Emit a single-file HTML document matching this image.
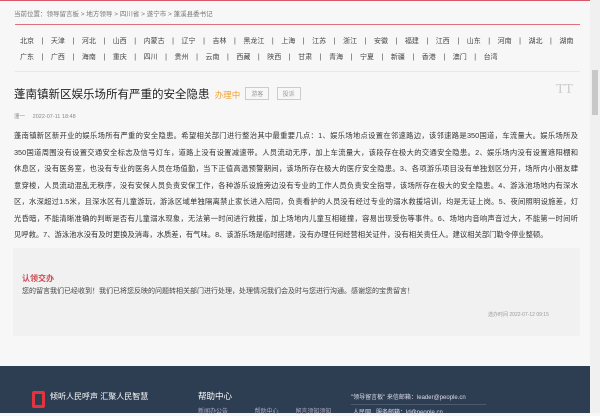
<!DOCTYPE html>
<html><head><meta charset="utf-8"><style>
*{margin:0;padding:0;box-sizing:border-box}
body{width:600px;height:413px;overflow:hidden;background:#f8f7f8;font-family:"Liberation Sans","Noto Sans CJK SC",sans-serif;color:#333;position:relative}
.abs{position:absolute}
.prov{font-size:7px;color:#444;white-space:nowrap}
.prov span{margin:0 5.6px}
.body div{white-space:nowrap;text-align:justify;text-align-last:justify;height:16.5px}
.body div.last{text-align-last:left}
</style></head><body>
<div class="abs" style="left:0;top:0;width:590px;height:1px;background:#d9596a"></div>
<div class="abs" style="left:14px;top:8px;font-size:6.5px;color:#777">当前位置：领导留言板 &gt; 地方领导 &gt; 四川省 &gt; 遂宁市 &gt; 蓬溪县委书记</div>
<div class="abs" style="left:15px;top:24px;width:565px;height:1px;background:#e07080"></div>
<div class="abs prov" style="left:20px;top:36px">北京 <span>|</span> 天津 <span>|</span> 河北 <span>|</span> 山西 <span>|</span> 内蒙古 <span>|</span> 辽宁 <span>|</span> 吉林 <span>|</span> 黑龙江 <span>|</span> 上海 <span>|</span> 江苏 <span>|</span> 浙江 <span>|</span> 安徽 <span>|</span> 福建 <span>|</span> 江西 <span>|</span> 山东 <span>|</span> 河南 <span>|</span> 湖北 <span>|</span> 湖南</div>
<div class="abs prov" style="left:20px;top:52px">广东 <span>|</span> 广西 <span>|</span> 海南 <span>|</span> 重庆 <span>|</span> 四川 <span>|</span> 贵州 <span>|</span> 云南 <span>|</span> 西藏 <span>|</span> 陕西 <span>|</span> 甘肃 <span>|</span> 青海 <span>|</span> 宁夏 <span>|</span> 新疆 <span>|</span> 香港 <span>|</span> 澳门 <span>|</span> 台湾</div>
<div class="abs" style="left:15px;top:71px;width:565px;height:1px;background:#e8e8e8"></div>
<div class="abs" style="left:14px;top:86px;font-size:11.5px;color:#222;white-space:nowrap">蓬南镇新区娱乐场所有严重的安全隐患 <span style="font-size:8.5px;color:#f0a030;margin-left:2px">办理中</span>
<span style="display:inline-block;font-size:6px;color:#999;border:1px solid #ccc;padding:1px 5px;vertical-align:2px;margin-left:2px">游客</span>
<span style="display:inline-block;font-size:6px;color:#999;border:1px solid #ccc;padding:1px 5px;vertical-align:2px;margin-left:4px">投诉</span></div>
<div class="abs" style="left:556px;top:82px;font-size:14px;color:#ccc;font-family:'Liberation Serif',serif">TT</div>
<div class="abs" style="left:14px;top:112px;font-size:5.5px;color:#888">潼一 &nbsp;&nbsp;&nbsp;&nbsp;2022-07-11 18:48</div>
<div class="abs body" style="left:14px;top:128px;width:564px;font-size:7.3px;line-height:16.5px;color:#333">
<div>蓬南镇新区新开业的娱乐场所有严重的安全隐患。希望相关部门进行整治其中最重要几点：1、娱乐场地点设置在邻速路边，该邻速路是350国道，车流量大。娱乐场所及</div>
<div>350国道周围没有设置交通安全标志及信号灯车，道路上没有设置减速带。人员流动无序，加上车流量大，该段存在极大的交通安全隐患。2、娱乐场内没有设置遮阳棚和</div>
<div>休息区，没有医务室，也没有专业的医务人员在场值勤，当下正值高温预警期间，该场所存在极大的医疗安全隐患。3、各项游乐项目没有单独划区分开，场所内小朋友肆</div>
<div>意穿梭，人员流动混乱无秩序，没有安保人员负责安保工作，各种游乐设施旁边没有专业的工作人员负责安全指导，该场所存在极大的安全隐患。4、游泳池场地内有深水</div>
<div>区，水深超过1.5米，且深水区有儿童游玩，游泳区域单独隔离禁止家长进入陪同，负责看护的人员没有经过专业的溺水救援培训，均是无证上岗。5、夜间照明设施差，灯</div>
<div>光昏暗，不能清晰准确的判断是否有儿童溺水现象，无法第一时间进行救援，加上场地内儿童互相碰撞，容易出现受伤等事件。6、场地内音响声音过大，不能第一时间听</div>
<div class="last">见呼救。7、游泳池水没有及时更换及消毒，水质差，有气味。8、该游乐场是临时搭建，没有办理任何经营相关证件，没有相关责任人。建议相关部门勒令停业整顿。</div>
</div>
<div class="abs" style="left:13px;top:248px;width:567px;height:88px;background:#f1f1f1"></div>
<div class="abs" style="left:22px;top:273px;font-size:8px;font-weight:bold;color:#d04a55">认领交办</div>
<div class="abs" style="left:22px;top:286px;font-size:7px;color:#444">您的留言我们已经收到！我们已将您反映的问题转相关部门进行处理，处理情况我们会及时与您进行沟通。感谢您的宝贵留言！</div>
<div class="abs" style="left:488px;top:311px;font-size:5px;color:#999">选办时间 2022-07-12 09:15</div>
<div class="abs" style="left:0;top:366px;width:590px;height:47px;background:#2d3d52"></div>
<div class="abs" style="left:32px;top:391px;width:13px;height:17px;border:3px solid #e0343f;border-radius:2px"></div>
<div class="abs" style="left:50px;top:391px;font-size:8px;color:#fff">倾听人民呼声 汇聚人民智慧</div>
<div class="abs" style="left:198px;top:390px;font-size:8.5px;color:#fff">帮助中心</div>
<div class="abs" style="left:198px;top:406px;font-size:6px;color:#aab">新闻办公告 &nbsp;&nbsp;&nbsp;&nbsp;&nbsp;&nbsp;&nbsp;&nbsp;&nbsp;&nbsp;&nbsp;&nbsp;&nbsp;&nbsp;&nbsp;帮助中心 &nbsp;&nbsp;&nbsp;&nbsp;&nbsp;&nbsp;&nbsp;&nbsp;&nbsp;留言须知须知</div>
<div class="abs" style="left:351px;top:392px;font-size:6px;color:#dde">"领导留言板" 来信邮箱：leader@people.cn</div>
<div class="abs" style="left:351px;top:404px;width:135px;height:1px;background:#4a5a70"></div>
<div class="abs" style="left:353px;top:407px;font-size:6px;color:#dde">人民网 &nbsp;&nbsp;服务邮箱：ld@people.cn</div>
<div class="abs" style="left:590px;top:0;width:10px;height:413px;background:#f0f0f0"></div>
<div class="abs" style="left:592px;top:70px;width:6px;height:45px;background:#c8c8c8"></div>
</body></html>
